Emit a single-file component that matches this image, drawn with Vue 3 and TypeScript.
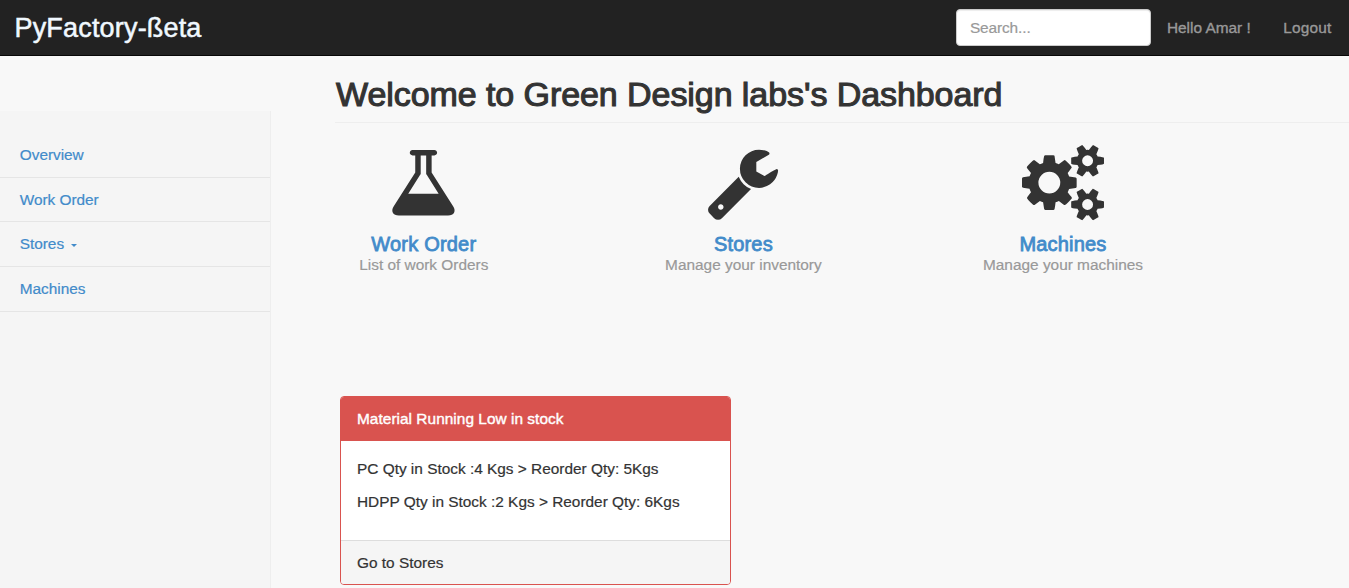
<script setup lang="ts">
interface NavItem {
  label: string
  caret?: boolean
}
interface Tile {
  title: string
  note: string
  viewBox: string
  path: string
}

const navItems: NavItem[] = [
  { label: 'Overview' },
  { label: 'Work Order' },
  { label: 'Stores', caret: true },
  { label: 'Machines' },
]

const smallCog =
  'v140q0 16-149 31-12 27-30 52 51 113 51 138 0 4-4 7-122 71-124 71-8 0-46-47t-52-68q-20 2-30 2t-30-2q-14 21-52 68t-46 47q-2 0-124-71-4-3-4-7 0-25 51-138-18-25-30-52-149-15-149-31v-140q0-16 149-31 13-29 30-52-51-113-51-138 0-4 4-7 4-2 35-20t59-34 30-16q8 0 46 46.5t52 67.5q20-2 30-2t30 2q51-71 92-112l6-2q4 0 124 70 4 3 4 7 0 25-51 138 17 23 30 52 149 15 149 31z'

const tiles: Tile[] = [
  {
    title: 'Work Order',
    note: 'List of work Orders',
    viewBox: '-45 14 1792 1792',
    path: 'M1527 1496q56 89 21.5 152.5t-140.5 63.5h-1152q-106 0-140.5-63.5t21.5-152.5l503-793v-399h-64q-26 0-45-19t-19-45 19-45 45-19h512q26 0 45 19t19 45-19 45-45 19h-64v399zm-779-725l-272 429h712l-272-429-20-31v-436h-128v436z',
  },
  {
    title: 'Stores',
    note: 'Manage your inventory',
    viewBox: '14 -28 1792 1792',
    path: 'M448 1472q0-26-19-45t-45-19-45 19-19 45 19 45 45 19 45-19 19-45zm644-420l-682 682q-37 37-90 37-52 0-91-37l-106-108q-38-36-38-90 0-53 38-91l681-681q39 98 114.5 173.5t173.5 114.5zm634-435q0 39-23 106-47 134-164.5 217.5t-258.5 83.5q-185 0-316.5-131.5t-131.5-316.5 131.5-316.5 316.5-131.5q58 0 121.5 16.5t107.5 46.5q16 11 16 28t-16 28l-293 169v224l193 107q5-3 79-48.5t135.5-81 70.5-35.5q15 0 23.5 10t8.5 25z',
  },
  {
    title: 'Machines',
    note: 'Manage your machines',
    viewBox: '6 -32 1792 1792',
    path:
      'M832 896q0-106-75-181t-181-75-181 75-75 181 75 181 181 75 181-75 75-181zm768 512q0-52-38-90t-90-38-90 38-38 90q0 53 37.5 90.5t90.5 37.5 90.5-37.5 37.5-90.5zm0-1024q0-52-38-90t-90-38-90 38-38 90q0 53 37.5 90.5t90.5 37.5 90.5-37.5 37.5-90.5zm-384 421v185q0 10-7 19.5t-16 10.5l-155 24q-11 35-32 76 34 48 90 115 7 10 7 20 0 12-7 19-23 30-82.5 89.5t-78.5 59.5q-11 0-21-7l-115-90q-37 19-77 31-11 108-23 155-7 24-30 24h-186q-11 0-20-7.5t-10-17.5l-23-153q-34-10-75-31l-118 89q-7 7-20 7-11 0-21-8-144-133-144-160 0-9 7-19 10-14 41-53t47-61q-23-44-35-82l-152-24q-10-1-17-9.5t-7-19.5v-185q0-10 7-19.5t16-10.5l155-24q11-35 32-76-34-48-90-115-7-11-7-20 0-12 7-20 22-30 82-89t79-59q11 0 21 7l115 90q34-18 77-32 11-108 23-154 7-24 30-24h186q11 0 20 7.5t10 17.5l23 153q34 10 75 31l118-89q8-7 20-7 11 0 21 8 144 133 144 160 0 9-7 19-12 16-42 54t-45 60q23 48 34 82l152 23q10 2 17 10.5t7 19.5zm640 533' +
      smallCog +
      'm0-1024' +
      smallCog,
  },
]

const lowStock: string[] = [
  'PC Qty in Stock :4 Kgs > Reorder Qty: 5Kgs',
  'HDPP Qty in Stock :2 Kgs > Reorder Qty: 6Kgs',
]
</script>

<template>
  <div class="page">
    <header class="navbar">
      <a class="brand">PyFactory-ßeta</a>
      <input class="search" type="text" placeholder="Search..." />
      <a class="user">Hello Amar !</a>
      <a class="logout">Logout</a>
    </header>
    <div class="body">
      <nav class="sidebar">
        <a v-for="item in navItems" :key="item.label" class="nav-item">
          {{ item.label }}<i v-if="item.caret" class="caret"></i>
        </a>
      </nav>
      <main class="main">
        <h1 class="title">Welcome to Green Design labs's Dashboard</h1>
        <section class="tiles">
          <div v-for="tile in tiles" :key="tile.title" class="tile">
            <svg class="icon" :viewBox="tile.viewBox"><path :d="tile.path" /></svg>
            <a class="tile-title">{{ tile.title }}</a>
            <span class="tile-note">{{ tile.note }}</span>
          </div>
        </section>
        <section class="panel">
          <div class="panel-head">Material Running Low in stock</div>
          <div class="panel-body">
            <p v-for="row in lowStock" :key="row">{{ row }}</p>
          </div>
          <div class="panel-foot">Go to Stores</div>
        </section>
      </main>
    </div>
  </div>
</template>

<style>
body {
  background: #f8f8f8;
  overflow: hidden;
}
</style>

<style scoped>
.page {
  box-sizing: border-box;
  height: 588px;
  display: flex;
  flex-direction: column;
  overflow: hidden;
  background: #f8f8f8;
  color: #333;
  font: 15.4px/22px "Liberation Sans", Arial, sans-serif;
  -webkit-text-stroke: 0.2px currentColor;
}
.page * {
  box-sizing: border-box;
}
.navbar {
  flex: none;
  height: 56px;
  display: flex;
  align-items: center;
  padding: 0 17.5px 0 14.5px;
  background: #222;
  border-bottom: 1px solid #080808;
  color: #999;
}
.brand {
  color: #f0f8ff;
  font-size: 27px;
  line-height: 30px;
  letter-spacing: 0.18px;
  -webkit-text-stroke: 0.5px #f0f8ff;
  margin-right: auto;
}
.search {
  width: 195px;
  height: 37px;
  margin: 0 16px 0 0;
  padding: 0 13px;
  border: 1px solid #ccc;
  border-radius: 4px;
  background: #fff;
  box-shadow: inset 0 1px 1px rgba(0, 0, 0, 0.075);
  font: inherit;
  letter-spacing: -0.1px;
}
.search::placeholder {
  color: #999;
  opacity: 1;
}
.user,
.logout {
  -webkit-text-stroke: 0.35px #999;
  white-space: nowrap;
}
.logout {
  letter-spacing: 0.2px;
}
.user {
  margin-right: 32.5px;
}
.body {
  flex: 1;
  display: flex;
  min-height: 0;
}
.sidebar {
  flex: none;
  width: 271px;
  margin-top: 55px;
  padding-top: 22px;
  background: #f5f5f5;
  border-right: 1px solid #eee;
}
.nav-item {
  display: flex;
  align-items: center;
  height: 44.7px;
  padding-left: 19.8px;
  border-bottom: 1px solid #e5e5e5;
  color: #428bca;
  letter-spacing: -0.04px;
  -webkit-text-stroke: 0.2px #428bca;
}
.caret {
  margin: 2px 0 0 7px;
  border: 3.5px solid transparent;
  border-top: 3.5px solid #428bca;
  border-bottom: 0;
}
.main {
  flex: 1;
  padding-left: 64px;
}
.title {
  height: 67px;
  margin: 0;
  padding: 19px 0 0 1px;
  border-bottom: 1px solid #eee;
  font-size: 34px;
  font-weight: 400;
  line-height: 38px;
  letter-spacing: -0.07px;
  -webkit-text-stroke: 1.1px #333;
}
.tiles {
  display: flex;
  height: 273px;
  margin-left: -71px;
  padding-top: 20px;
}
.tile {
  width: 319.6px;
  display: flex;
  flex-direction: column;
  align-items: center;
}
.icon {
  width: 76.5px;
  height: 76.5px;
  overflow: visible;
  fill: #333;
}
.tile-title {
  margin-top: 13px;
  color: #428bca;
  font-size: 20px;
  line-height: 22px;
  letter-spacing: 0.2px;
  -webkit-text-stroke: 0.8px #428bca;
}
.tile-note {
  line-height: 20px;
  color: #999;
  -webkit-text-stroke: 0.2px #999;
}
.panel {
  width: 391px;
  height: 189px;
  margin-left: 5px;
  display: flex;
  flex-direction: column;
  overflow: hidden;
  background: #fff;
  border: 1px solid #d9534f;
  border-radius: 4px;
}
.panel-head {
  flex: none;
  height: 44px;
  padding: 11px 16px;
  background: #d9534f;
  color: #fff;
  letter-spacing: 0.04px;
  -webkit-text-stroke: 0.4px #fff;
}
.panel-body {
  flex: 1;
  min-height: 0;
  padding: 17px 16px 0;
}
.panel-body p {
  margin: 0 0 11px;
}
.panel-foot {
  flex: none;
  height: 44px;
  padding: 11px 16px;
  background: #f5f5f5;
  border-top: 1px solid #ddd;
}
</style>
